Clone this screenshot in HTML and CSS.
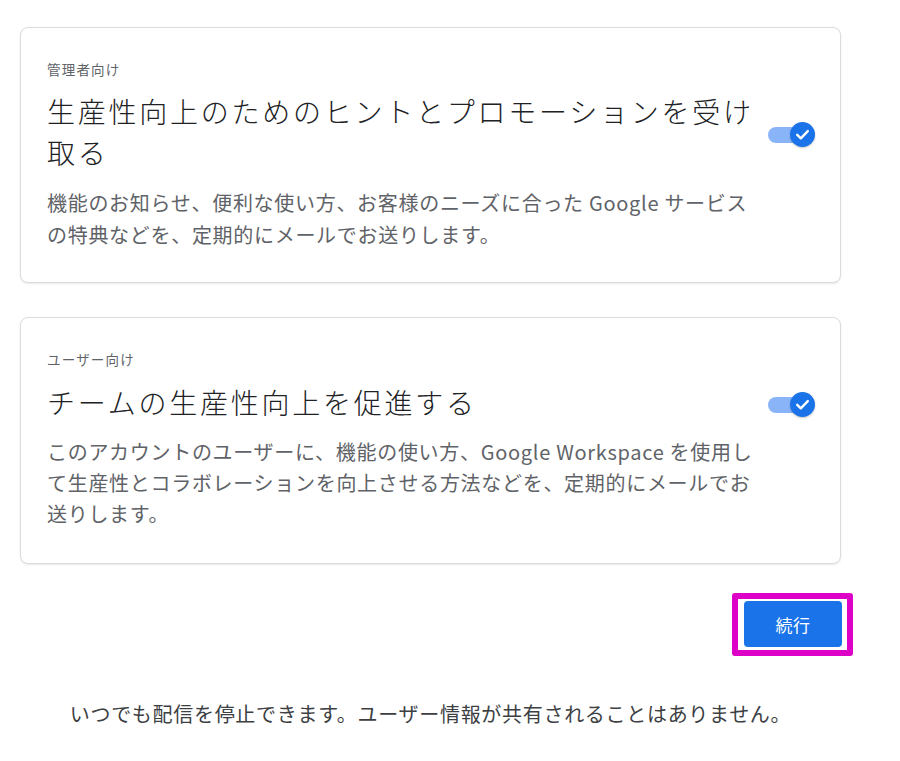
FILE: index.html
```html
<!DOCTYPE html>
<html lang="ja">
<head>
<meta charset="utf-8">
<link rel="stylesheet" href="styles.css">
</head>
<body>
<main class="page">
  <section class="card">
    <div class="label">管理者向け</div>
    <div class="row">
      <h2 class="title">生産性向上のためのヒントとプロモーションを受け<br>取る</h2>
      <span class="toggle" role="switch" aria-checked="true">
        <span class="track"></span>
        <span class="knob"><svg viewBox="0 0 25 25" width="25" height="25"><path d="M7.2 12.8l3.6 3.5 7-7.2" fill="none" stroke="#fff" stroke-width="2.4" stroke-linecap="round" stroke-linejoin="round"/></svg></span>
      </span>
    </div>
    <p class="desc">機能のお知らせ、便利な使い方、お客様のニーズに合った Google サービス<br>の特典などを、定期的にメールでお送りします。</p>
  </section>

  <section class="card card-second">
    <div class="label">ユーザー向け</div>
    <div class="row">
      <h2 class="title">チームの生産性向上を促進する</h2>
      <span class="toggle" role="switch" aria-checked="true">
        <span class="track"></span>
        <span class="knob"><svg viewBox="0 0 25 25" width="25" height="25"><path d="M7.2 12.8l3.6 3.5 7-7.2" fill="none" stroke="#fff" stroke-width="2.4" stroke-linecap="round" stroke-linejoin="round"/></svg></span>
      </span>
    </div>
    <p class="desc">このアカウントのユーザーに、機能の使い方、Google Workspace を使用し<br>て生産性とコラボレーションを向上させる方法などを、定期的にメールでお<br>送りします。</p>
  </section>

  <div class="actions">
    <span class="highlight"><button class="btn" type="button">続行</button></span>
  </div>

  <p class="footer">いつでも配信を停止できます。ユーザー情報が共有されることはありません。</p>
</main>
</body>
</html>
```

FILE: styles.css
```css
html, body {
  margin: 0;
  padding: 0;
  background: #ffffff;
}

body {
  font-family: "Noto Sans CJK JP", "Noto Sans", "Liberation Sans", sans-serif;
  color: #202124;
}

.page {
  width: 821px;
  margin-left: 20px;
  padding-top: 27px;
}

.card {
  border: 1px solid #dadce0;
  border-radius: 8px;
  box-shadow: 0 1px 2px rgba(60, 64, 67, 0.12);
  padding: 31px 25px 31px 26px;
  background: #fff;
}

.card-second {
  margin-top: 34px;
  padding-bottom: 34px;
}

.label {
  font-size: 13.5px;
  line-height: 20px;
  letter-spacing: 1.2px;
  color: #5f6368;
}

.row {
  display: flex;
  align-items: center;
  margin-top: 12px;
}

.title {
  flex: 1;
  margin: 0;
  font-size: 28px;
  font-weight: 300;
  line-height: 41px;
  letter-spacing: 2.75px;
  color: #202124;
  white-space: nowrap;
}

.toggle {
  position: relative;
  flex: none;
  width: 47px;
  height: 26px;
  margin-top: 5px;
}

.track {
  position: absolute;
  left: 0;
  top: 5px;
  width: 38px;
  height: 16px;
  border-radius: 8px;
  background: #8ab4f8;
}

.knob {
  position: absolute;
  right: 0;
  top: 0;
  width: 25px;
  height: 25px;
  border-radius: 50%;
  background: #1a73e8;
  box-shadow: 0 1px 2px rgba(60, 64, 67, 0.3);
  display: flex;
}

.desc {
  margin: 14px 0 0;
  font-size: 20px;
  line-height: 32px;
  letter-spacing: 0.7px;
  color: #5f6368;
  white-space: nowrap;
}

.card-second .row {
  margin-top: 13px;
}

.card-second .desc {
  line-height: 31px;
  margin-top: 13px;
}

.actions {
  display: flex;
  justify-content: flex-end;
  margin-top: 29px;
  margin-right: -12px;
}

.highlight {
  display: inline-flex;
  border: 6px solid #dd00c6;
  border-radius: 3px;
  padding: 2px 5px 3px 6px;
}

.btn {
  width: 98px;
  height: 46px;
  border: none;
  border-radius: 4px;
  background: #1a73e8;
  color: #fff;
  font-family: "Noto Sans CJK JP", "Noto Sans", sans-serif;
  font-size: 17px;
  letter-spacing: 0.5px;
  padding: 0;
}

.footer {
  margin: 42px 0 0;
  text-align: center;
  font-size: 20px;
  line-height: 32px;
  letter-spacing: 0.7px;
  color: #3c4043;
}
```
